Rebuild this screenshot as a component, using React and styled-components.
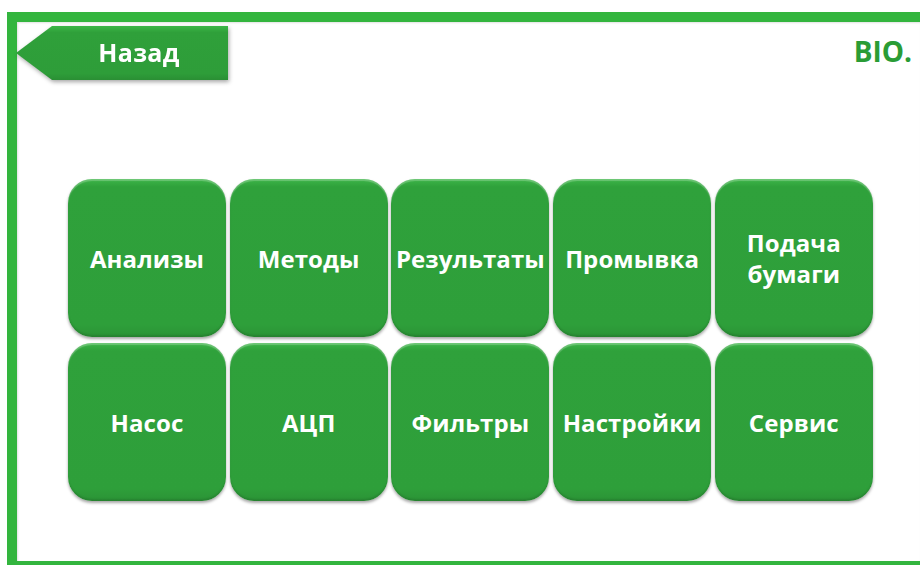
import styled, { createGlobalStyle } from "styled-components";

const GlobalStyle = createGlobalStyle`
  html, body {
    margin: 0;
    padding: 0;
    background: #ffffff;
  }
  body {
    font-family: "Open Sans", "DejaVu Sans", sans-serif;
  }
`;

const items = [
  "Анализы",
  "Методы",
  "Результаты",
  "Промывка",
  "Подача\nбумаги",
  "Насос",
  "АЦП",
  "Фильтры",
  "Настройки",
  "Сервис",
];

export default function App() {
  return (
    <>
      <GlobalStyle />
      <Page>
        <Frame>
          <Header>
            <BackWrap>
              <BackButton>Назад</BackButton>
            </BackWrap>
            <Brand>BIO.</Brand>
          </Header>

          <Grid>
            {items.map((label) => (
              <Tile key={label}>{label}</Tile>
            ))}
          </Grid>
        </Frame>
      </Page>
    </>
  );
}

const Page = styled.div`
  width: 920px;
  height: 565px;
  padding: 12px 0 0 7px;
  box-sizing: border-box;
  overflow: hidden;
  background: #ffffff;
`;

const Frame = styled.div`
  height: 553px;
  box-sizing: border-box;
  border-top: 10px solid #33b53e;
  border-left: 10px solid #33b53e;
  border-bottom: 4px solid #33b53e;
  box-shadow: inset 1px 1px 2px rgba(0, 0, 0, 0.12);
  display: flex;
  flex-direction: column;
`;

const Header = styled.div`
  display: flex;
  align-items: flex-start;
  justify-content: space-between;
  padding: 4px 8px 0 0;
  margin-left: -1px;
`;

const BackWrap = styled.div`
  filter: drop-shadow(1px 2px 2px rgba(0, 0, 0, 0.35));
`;

const BackButton = styled.div`
  width: 212px;
  height: 54px;
  box-sizing: border-box;
  padding: 0 0 2px 34px;
  display: flex;
  align-items: center;
  justify-content: center;
  clip-path: polygon(36px 0, 100% 0, 100% 100%, 36px 100%, 0 50%);
  background: linear-gradient(180deg, #3cb747 0%, #2fa03a 12%, #2e9d39 88%, #2a8f34 100%);
  color: #ffffff;
  font-size: 25px;
  font-weight: 700;
  letter-spacing: 0.3px;
`;

const Brand = styled.div`
  margin-top: 10px;
  color: #2a9c35;
  font-size: 28px;
  font-weight: 700;
  line-height: 30px;
`;

const Grid = styled.div`
  display: grid;
  grid-template-columns: repeat(5, 158px);
  grid-auto-rows: 158px;
  column-gap: 3.7px;
  row-gap: 6px;
  margin: 99px 0 0 51px;
`;

const Tile = styled.div`
  display: flex;
  align-items: center;
  justify-content: center;
  text-align: center;
  white-space: pre-line;
  border-radius: 24px;
  background: linear-gradient(180deg, #3db548 0%, #2fa13b 5%, #2e9f3a 92%, #2b9336 100%);
  box-shadow: 0 2px 3px rgba(0, 0, 0, 0.35), inset 0 2px 1px rgba(255, 255, 255, 0.25),
    inset 0 -2px 2px rgba(0, 0, 0, 0.12);
  color: #ffffff;
  font-size: 24px;
  font-weight: 700;
  line-height: 31px;
  letter-spacing: 0.1px;
`;
